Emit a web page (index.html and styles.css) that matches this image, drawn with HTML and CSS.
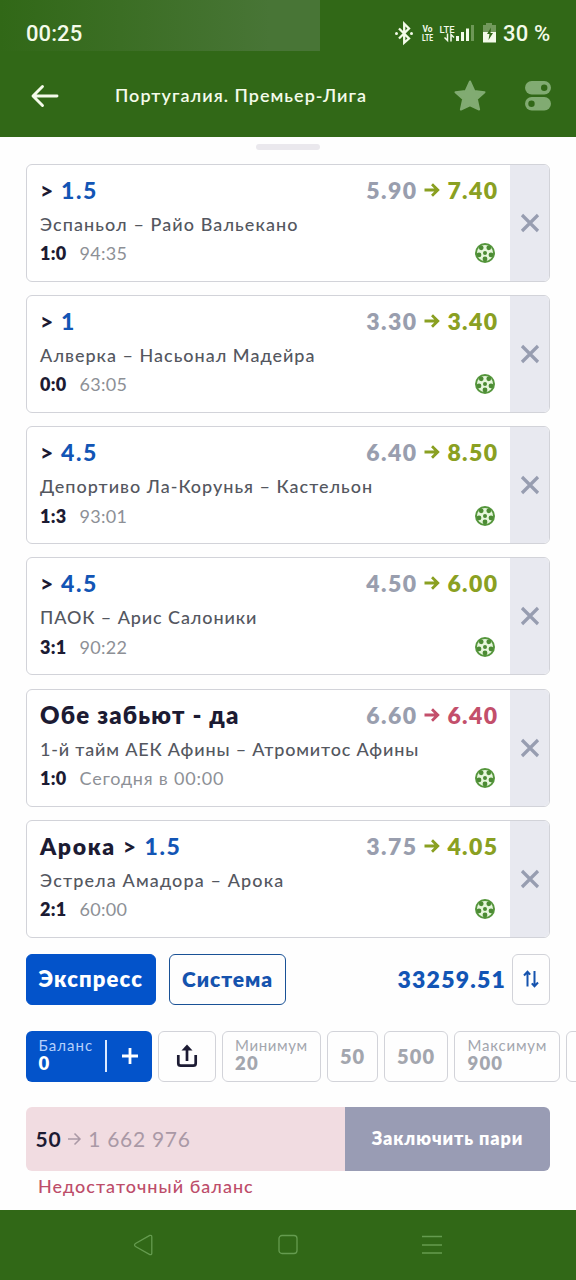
FILE: index.html
```html
<!DOCTYPE html>
<html lang="ru">
<head>
<meta charset="utf-8">
<title>Португалия. Премьер-Лига</title>
<link rel="stylesheet" href="styles.css">
</head>
<body>
<svg class="defs" width="0" height="0">
  <symbol id="ball" viewBox="0 0 20 20">
    <circle cx="10" cy="10" r="10" fill="#55963c"/>
    <circle cx="10" cy="10" r="8" fill="#e6f6dc"/>
    <g fill="#4c8b34"><circle cx="10" cy="10" r="2"/><circle cx="6.200" cy="4.800" r="2.400"/><circle cx="13.800" cy="4.800" r="2.400"/><circle cx="4" cy="11.900" r="2.400"/><circle cx="16" cy="11.900" r="2.400"/><circle cx="10" cy="16" r="2.400"/></g>
  </symbol>
  <symbol id="arrow" viewBox="0 0 16 16"><path d="M.5 8H13.500M8 2.200L13.800 8 8 13.800" fill="none" stroke="currentColor" stroke-width="2.800"/></symbol>
  <symbol id="cross" viewBox="0 0 20 20"><path d="M2 2l16 16M18 2L2 18" fill="none" stroke="#979db0" stroke-width="3.200"/></symbol>
</svg>

<div class="status">
  <span class="clock">00:25</span>
  <svg class="status-icons" width="109" height="24" viewBox="0 0 109 24">
    <path d="M5 6.500l10 10-4.800 4.300V1.800L15 6.500l-10 10" fill="none" stroke="#f4fbea" stroke-width="2.300"/>
    <circle cx="2.500" cy="11.500" r="1.500" fill="#f4fbea"/><circle cx="17.500" cy="11.500" r="1.500" fill="#f4fbea"/>
    <text class="tiny" x="28.500" y="10" textLength="10" lengthAdjust="spacingAndGlyphs">Vo</text>
    <text class="tiny" x="28" y="18.500" textLength="11" lengthAdjust="spacingAndGlyphs">LTE</text>
    <text class="tiny lte" x="45.500" y="11" textLength="15" lengthAdjust="spacingAndGlyphs">LTE</text>
    <path d="M53.500 11.500v7l-3-3M57 19.500v-7l3 3" stroke="#f4fbea" stroke-width="1.500" fill="none"/>
    <path d="M62 14h3v5h-3zM67 10h3v9h-3zM72 6.500h3v12.500h-3z" fill="#f4fbea"/>
    <path d="M77 3h3v16h-3z" fill="#6e9857"/>
    <path d="M92 1h6v2h4v7H89V3h3z" fill="#72995c"/><path d="M89 10h13v10.500H89z" fill="#f4fbea"/>
    <path d="M97 5.500l-4 6.500h2.500l-1 6 4.500-7h-2.500z" fill="#316817"/>
  </svg>
  <span class="percent">30 %</span>
</div>
<header class="header">
  <svg width="28" height="24" viewBox="0 0 28 24"><path d="M26 12H2.500M11.500 2.500L2 12l9.500 9.500" fill="none" stroke="#f4fbea" stroke-width="2.900" stroke-linecap="round" stroke-linejoin="round"/></svg>
  <h1 class="title">Португалия. Премьер-Лига</h1>
  <svg class="star" width="32" height="32" viewBox="0 0 32 32"><path d="M16 1.500l4.300 9.500 10.200 1.200-7.600 6.900 2.200 10.400L16 25.300l-9.100 4.200 2.200-10.400-7.600-6.900L11.700 11z" fill="#81ab72" stroke="#81ab72" stroke-width="2" stroke-linejoin="round"/></svg>
  <svg class="toggles" width="26" height="30" viewBox="0 0 26 30"><rect width="26" height="13.500" rx="6.700" fill="#81ab72"/><rect y="16" width="26" height="13.500" rx="6.700" fill="#81ab72"/><circle cx="19.200" cy="6.700" r="3.200" fill="#316817"/><circle cx="6.500" cy="22.700" r="3.200" fill="#316817"/></svg>
</header>

<main class="sheet">
  <div class="handle"></div>
  <section class="cards">
    <article class="card"><div class="info">
      <div class="row top"><span class="pick"><b class="gt">&gt;</b> <b class="value">1.5</b></span><span class="odds"><span>5.90</span><span class="new up"><svg class="arr"><use href="#arrow"/></svg>7.40</span></span></div>
      <div class="row match"><span class="m1">Эспаньол – Райо Вальекано</span></div>
      <div class="row meta"><b class="score">1:0</b><span class="time">94:35</span><svg class="ball"><use href="#ball"/></svg></div>
    </div><button class="close"><svg><use href="#cross"/></svg></button></article>
    <article class="card"><div class="info">
      <div class="row top"><span class="pick"><b class="gt">&gt;</b> <b class="value">1</b></span><span class="odds"><span>3.30</span><span class="new up"><svg class="arr"><use href="#arrow"/></svg>3.40</span></span></div>
      <div class="row match"><span class="m2">Алверка – Насьонал Мадейра</span></div>
      <div class="row meta"><b class="score">0:0</b><span class="time">63:05</span><svg class="ball"><use href="#ball"/></svg></div>
    </div><button class="close"><svg><use href="#cross"/></svg></button></article>
    <article class="card"><div class="info">
      <div class="row top"><span class="pick"><b class="gt">&gt;</b> <b class="value">4.5</b></span><span class="odds"><span>6.40</span><span class="new up"><svg class="arr"><use href="#arrow"/></svg>8.50</span></span></div>
      <div class="row match"><span class="m3">Депортиво Ла-Корунья – Кастельон</span></div>
      <div class="row meta"><b class="score">1:3</b><span class="time">93:01</span><svg class="ball"><use href="#ball"/></svg></div>
    </div><button class="close"><svg><use href="#cross"/></svg></button></article>
    <article class="card"><div class="info">
      <div class="row top"><span class="pick"><b class="gt">&gt;</b> <b class="value">4.5</b></span><span class="odds"><span>4.50</span><span class="new up"><svg class="arr"><use href="#arrow"/></svg>6.00</span></span></div>
      <div class="row match"><span class="m4">ПАОК – Арис Салоники</span></div>
      <div class="row meta"><b class="score">3:1</b><span class="time">90:22</span><svg class="ball"><use href="#ball"/></svg></div>
    </div><button class="close"><svg><use href="#cross"/></svg></button></article>
    <article class="card"><div class="info">
      <div class="row top"><span class="pick both">Обе забьют - да</span><span class="odds"><span>6.60</span><span class="new down"><svg class="arr"><use href="#arrow"/></svg>6.40</span></span></div>
      <div class="row match"><span class="m5">1-й тайм АЕК Афины – Атромитос Афины</span></div>
      <div class="row meta"><b class="score">1:0</b><span class="time today">Сегодня в 00:00</span><svg class="ball"><use href="#ball"/></svg></div>
    </div><button class="close"><svg><use href="#cross"/></svg></button></article>
    <article class="card"><div class="info">
      <div class="row top"><span class="pick arouca">Арока <b class="gt">&gt;</b> <b class="value">1.5</b></span><span class="odds"><span>3.75</span><span class="new up"><svg class="arr"><use href="#arrow"/></svg>4.05</span></span></div>
      <div class="row match"><span class="m6">Эстрела Амадора – Арока</span></div>
      <div class="row meta"><b class="score">2:1</b><span class="time">60:00</span><svg class="ball"><use href="#ball"/></svg></div>
    </div><button class="close"><svg><use href="#cross"/></svg></button></article>
  </section>

  <div class="modes">
    <button class="mode active">Экспресс</button>
    <button class="mode system">Система</button>
    <span class="total">33259.51</span>
    <button class="sort"><svg width="16" height="18" viewBox="0 0 16 18"><path d="M4.500 16.500V2M1 5.500L4.500 1.700l2.700 3M11.500 1v15M8.800 13.300l2.700 3L15 12.500" fill="none" stroke="#1553ae" stroke-width="2"/></svg></button>
  </div>

  <div class="quick">
    <div class="balance"><div class="stack"><span class="balance-label">Баланс</span><b>0</b></div><i class="divider"></i><svg width="16" height="16" viewBox="0 0 16 16"><path d="M8 0v16M0 8h16" stroke="#fff" stroke-width="2.800"/></svg></div>
    <button class="chip share"><svg width="20" height="24" viewBox="0 0 20 24"><path d="M1.300 11v8.200q0 2.500 2.500 2.500h12.400q2.500 0 2.500-2.500V11M10 17V4" fill="none" stroke="#1c1b33" stroke-width="2.700"/><path d="M10 .5l5.500 6h-11z" fill="#1c1b33"/></svg></button>
    <button class="chip min stack"><span>Минимум</span><b>20</b></button>
    <button class="chip fifty"><b>50</b></button>
    <button class="chip five"><b>500</b></button>
    <button class="chip max stack"><span>Максимум</span><b>900</b></button>
    <button class="chip more"></button>
  </div>

  <div class="bet">
    <div class="stake"><b>50</b><svg width="13" height="14" viewBox="0 0 13 14"><path d="M0 7h12M6.500 1.500L12 7l-5.500 5.500" fill="none" stroke="#aa99a6" stroke-width="1.500"/></svg><span>1 662 976</span></div>
    <button class="place">Заключить пари</button>
  </div>
  <p class="error">Недостаточный баланс</p>
</main>

<nav class="nav">
  <svg width="20" height="22" viewBox="0 0 20 22"><path d="M15.800 1.400L1.500 9.500q-2 1.500 0 3l14.300 8.100q2 .5 2-1.600V3q0-2-2-1.600z"/></svg>
  <svg width="20" height="22" viewBox="0 0 20 22"><rect x="1" y="1.500" width="18" height="18" rx="3"/></svg>
  <svg width="20" height="22" viewBox="0 0 20 22"><path d="M0 2.500h20M0 11h20M0 19h20"/></svg>
</nav>
</body>
</html>
```
FILE: styles.css
```css
* { box-sizing: border-box; }
body { margin: 0; width: 576px; height: 1280px; overflow: hidden; display: flex; flex-direction: column; background: #fefefe; font-family: Lato, "Noto Sans", sans-serif; color: #1c1b33; }
button { font: inherit; padding: 0; margin: 0; border: 0; background: none; white-space: nowrap; }
svg { display: block; flex: none; overflow: visible; }
.defs { display: none; }

.status { height: 51px; flex: none; display: flex; align-items: center; padding: 16px 25px 0 26px; background: linear-gradient(90deg, #316817 0, #3b6e24 120px, #487536 270px, #487536 320px, #316817 320px); font: 500 22px/36px Roboto, sans-serif; color: #f4fbea; }
.clock { letter-spacing: .1px; }
.status-icons { margin-left: auto; }
.tiny { font: 700 9.500px Roboto, sans-serif; fill: #f4fbea; }
.lte { font-weight: 500; }
.percent { width: 48px; white-space: nowrap; letter-spacing: .2px; }
.header { height: 86px; flex: none; display: flex; align-items: center; padding: 4px 25px 0 31px; background: #316817; }
.title { margin: -2px auto 0 56px; font-size: 18px; font-weight: 600; letter-spacing: 1.030px; color: #f4fbea; white-space: nowrap; }
.star { margin-right: 39px; }

.sheet { height: 1073px; flex: none; display: flex; flex-direction: column; align-items: stretch; padding-top: 7px; }
.handle { width: 64px; height: 6px; flex: none; border-radius: 3px; background: #eae8ed; align-self: center; }
.cards { display: flex; flex-direction: column; gap: 13.250px; padding: 13.500px 26px 0 25.500px; }
.card { height: 118px; display: flex; border: 1.500px solid #d2d3d9; border-radius: 6px; overflow: hidden; background: #fff; }
.info { flex: 1; padding: 10px 12px 0 13.500px; }
.close { width: 39px; display: grid; place-items: center; background: #e8e9f0; }
.close svg { width: 20px; height: 20px; }
.row { display: flex; align-items: center; white-space: nowrap; }
.top { height: 30px; justify-content: space-between; font-size: 23px; font-weight: 800; }
.pick { letter-spacing: 1.200px; }
.both { font-size: 24px; letter-spacing: 1.200px; }
.arouca { letter-spacing: 1.600px; }
.value { color: #1255b5; letter-spacing: 1.500px; }
.odds { display: flex; gap: 7px; color: #999eae; letter-spacing: 1.400px; margin-right: -.5px; }
.new { display: flex; align-items: center; gap: 7px; }
.arr { width: 16px; height: 16px; }
.up { color: #8aa022; }
.down { color: #c34f6b; }
.match { height: 24px; margin-top: 7px; font-size: 18px; font-weight: 500; color: #54575f; }
.m1 { letter-spacing: 1.080px; }
.m2 { letter-spacing: 1px; }
.m3 { letter-spacing: 1px; }
.m4 { letter-spacing: .9px; }
.m5 { letter-spacing: .820px; }
.m6 { letter-spacing: 1.130px; }
.meta { height: 24px; margin-top: 5.500px; font-size: 18px; color: #8d9096; }
.score { width: 39.500px; color: #1c1b33; font-weight: 800; letter-spacing: .3px; }
.time { letter-spacing: .3px; font-weight: 400; }
.today { letter-spacing: .800px; }
.ball { width: 20px; height: 20px; margin-left: auto; margin-right: 3.500px; }

.modes { display: flex; align-items: center; height: 51px; margin: 16px 26px 0 25.500px; flex: none; font-size: 21px; font-weight: 800; }
.mode { height: 51px; width: 117px; padding-bottom: 1px; border-radius: 6px; border: 1.500px solid #1a5296; color: #1553ae; letter-spacing: .9px; }
.mode.active { width: 130.500px; margin-right: 13px; background: #0353ca; border-color: #0353ca; color: #fff; font-size: 22px; letter-spacing: 1.150px; }
.total { margin-left: auto; font-size: 23px; letter-spacing: 1.200px; color: #1255b5; }
.sort { width: 38px; height: 51px; margin-left: 6px; display: grid; place-items: center; border: 1.500px solid #d2d3d9; border-radius: 6px; }

.quick { display: flex; gap: 6.300px; height: 51px; margin: 26px 0 0 25.500px; flex: none; overflow: hidden; }
.balance { width: 126.500px; flex: none; display: flex; align-items: center; padding: 0 14.500px 0 13px; background: #0353ca; border-radius: 6px; color: #fff; }
.balance .stack { letter-spacing: 1px; }
.divider { width: 1.500px; height: 32px; margin: 0 15px 0 auto; background: #dce9ff; }
.balance-label { color: #b5d0fb; }
.chip { flex: none; display: flex; align-items: center; justify-content: center; border: 1.500px solid #d2d3d9; border-radius: 6px; color: #a3a6ae; font-size: 20px; letter-spacing: .8px; }
.chip b, .balance b { font-weight: 800; }
.stack { display: flex; flex-direction: column; align-items: flex-start; justify-content: center; padding-bottom: 3px; font-size: 15px; line-height: 18px; letter-spacing: .6px; }
.stack b { font-size: 18.500px; line-height: 19px; letter-spacing: 1.200px; }
.share { width: 57.500px; }
.min, .max { padding-left: 12px; }
.min { width: 98.500px; }
.fifty { width: 51px; }
.five { width: 64px; letter-spacing: 1.200px; }
.max { width: 105.500px; letter-spacing: .8px; }
.more { width: 60px; }

.bet { height: 64px; flex: none; display: flex; margin: 25px 26px 0 25.500px; border-radius: 6px; overflow: hidden; }
.stake { flex: 1; display: flex; align-items: center; gap: 7px; padding-left: 10px; background: #f1dce1; font-size: 21px; color: #aa99a6; letter-spacing: .7px; }
.stake b { color: #1c1b33; font-weight: 700; }
.place { width: 205px; padding-bottom: 2px; background: #999cb4; color: #fff; font-size: 18px; font-weight: 800; letter-spacing: .9px; }
.error { margin: 3px 0 0 38px; font-size: 18px; line-height: 24px; font-weight: 500; letter-spacing: 1.030px; color: #bd4d6a; }

.nav { height: 70px; flex: none; display: flex; justify-content: center; align-items: center; gap: 124px; background: #316817; }
.nav svg { fill: none; stroke: #659b4f; stroke-width: 1.300; }
```
